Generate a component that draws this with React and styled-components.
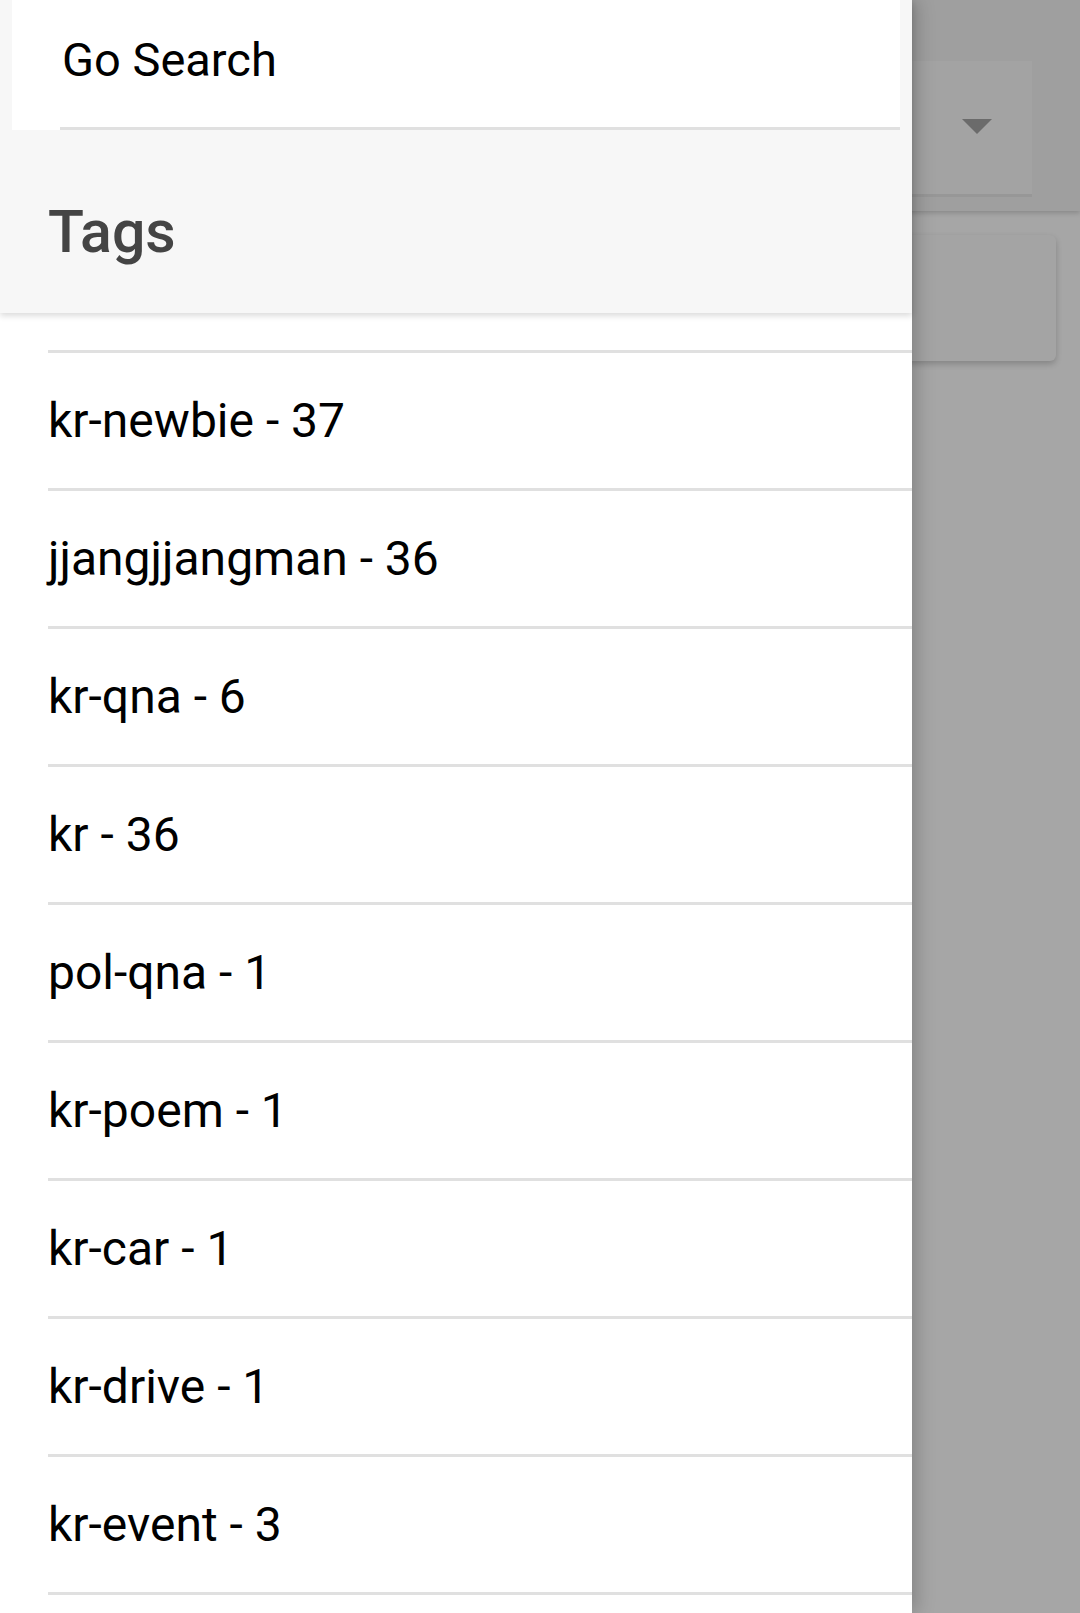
import React from 'react'
import styled, { createGlobalStyle } from 'styled-components'

const GlobalStyle = createGlobalStyle`
  html, body {
    margin: 0;
    padding: 0;
    background: #a6a6a6;
  }
  body {
    font-family: Roboto, "Noto Sans", "Liberation Sans", sans-serif;
  }
`

const Screen = styled.div`
  display: flex;
  width: 1080px;
  height: 1613px;
  overflow: hidden;
  background: #a6a6a6;
`

const Drawer = styled.aside`
  position: relative;
  z-index: 2;
  flex: 0 0 912px;
  display: flex;
  flex-direction: column;
  background: #fff;
  box-shadow: 4px 0 18px rgba(0, 0, 0, 0.22);
`

const DrawerHead = styled.header`
  background: #f7f7f7;
  box-shadow: 0 3px 6px rgba(0, 0, 0, 0.14);
  position: relative;
  z-index: 1;
`

const SearchBox = styled.div`
  margin: 0 12px;
  height: 130px;
  background: #fff;
  box-sizing: border-box;
  padding: 36px 0 0 50px;
  font-size: 47px;
  line-height: 48px;
  color: #000;
  position: relative;

  &::after {
    content: '';
    position: absolute;
    left: 48px;
    right: 0;
    bottom: 0;
    height: 3px;
    background: #e0e0e0;
  }
`

const Title = styled.h2`
  margin: 0;
  height: 183px;
  box-sizing: border-box;
  padding: 20px 0 0 48px;
  display: flex;
  align-items: center;
  font-size: 59px;
  font-weight: 500;
  color: #444;
`

const TagList = styled.ul`
  list-style: none;
  margin: 0;
  padding: 37px 0 0 48px;
`

const TagRow = styled.li`
  border-top: 3px solid #e0e0e0;
  display: flex;
  align-items: center;
  font-size: 48px;
  line-height: 48px;
  color: #000;
  padding-top: 1px;
  height: 134px;
`

const Backdrop = styled.main`
  flex: 1;
  display: flex;
  flex-direction: column;
  margin-left: -160px;
`

const AppBar = styled.div`
  height: 211px;
  background: #9f9f9f;
  box-shadow: 0 2px 5px rgba(0, 0, 0, 0.18);
  box-sizing: border-box;
  padding-top: 61px;
  position: relative;
  z-index: 1;
`

const SelectBox = styled.div`
  width: 280px;
  height: 136px;
  background: #a3a3a3;
  border-bottom: 3px solid #979797;
  display: flex;
  align-items: center;
  justify-content: flex-end;
  padding-right: 40px;
  box-sizing: border-box;
`

const Caret = styled.span`
  width: 0;
  height: 0;
  border-left: 15px solid transparent;
  border-right: 15px solid transparent;
  border-top: 15px solid #6b6b6b;
  margin-top: -3px;
`

const Card = styled.div`
  margin: 24px 24px 0 0;
  height: 126px;
  background: #a4a4a4;
  border-radius: 6px;
  box-shadow: 0 3px 6px rgba(0, 0, 0, 0.2);
`

const tags = [
  'kr-newbie - 37',
  'jjangjjangman - 36',
  'kr-qna - 6',
  'kr - 36',
  'pol-qna - 1',
  'kr-poem - 1',
  'kr-car - 1',
  'kr-drive - 1',
  'kr-event - 3',
]

export default function App() {
  return (
    <>
      <GlobalStyle />
      <Screen>
        <Drawer>
          <DrawerHead>
            <SearchBox>Go Search</SearchBox>
            <Title>Tags</Title>
          </DrawerHead>
          <TagList>
            {tags.map(t => (
              <TagRow key={t}>{t}</TagRow>
            ))}
            <TagRow />
          </TagList>
        </Drawer>
        <Backdrop>
          <AppBar>
            <SelectBox>
              <Caret />
            </SelectBox>
          </AppBar>
          <Card />
        </Backdrop>
      </Screen>
    </>
  )
}
